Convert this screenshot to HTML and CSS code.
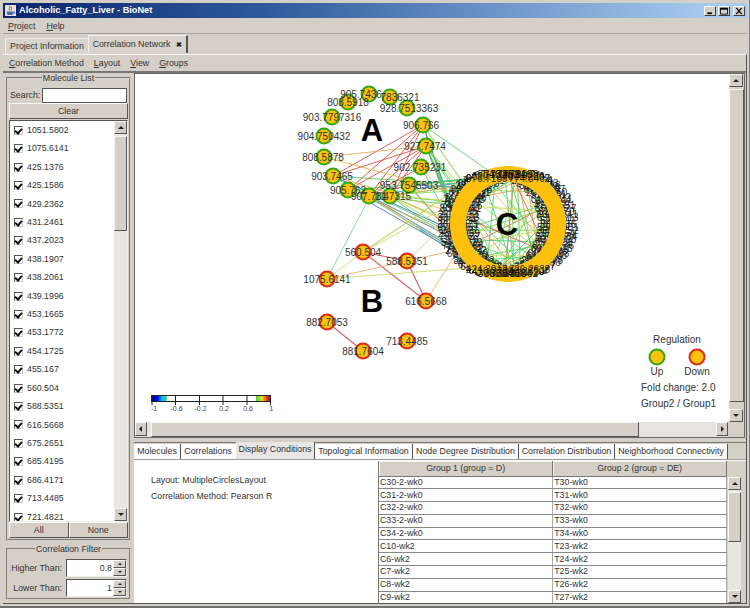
FILE: index.html
```html
<!DOCTYPE html>
<html lang="en">
<head>
<meta charset="utf-8">
<title>Alcoholic_Fatty_Liver - BioNet</title>
<link rel="stylesheet" href="styles.css">
</head>
<body>
<div class="window">
  <header class="titlebar">
    <svg class="appicon" viewBox="0 0 12 12"><rect width="12" height="12" fill="#e8e4dc"/><path d="M5 1c2 2-2 3 0 5M7 2c1 2-1 2 0 4" stroke="#c83020" fill="none"/><path d="M2 7h7v2c0 1-1 2-2 2H4c-1 0-2-1-2-2z" fill="#4a6aa8"/><path d="M9 7.5h1.5v1.5H9" stroke="#4a6aa8" fill="none"/></svg>
    <span class="title">Alcoholic_Fatty_Liver - BioNet</span>
    <span class="winbtns">
      <span class="winbtn"><svg viewBox="0 0 10 9"><rect x="2" y="6" width="5" height="2" fill="#000"/></svg></span>
      <span class="winbtn"><svg viewBox="0 0 10 9"><path d="M1 1.5h8V8H1z M1 1.5h8" fill="none" stroke="#000"/><rect x="1" y="1" width="8" height="2"/></svg></span>
      <span class="winbtn close"><svg viewBox="0 0 10 9"><path d="M2 1l6 7M8 1L2 8" stroke="#000" stroke-width="1.4"/></svg></span>
    </span>
  </header>
  <nav class="menubar">
    <span><u>P</u>roject</span><span><u>H</u>elp</span>
  </nav>
  <div class="tabs">
    <span class="tab">Project Information</span>
    <span class="tab active">Correlation Network <b class="x">✖</b></span>
  </div>
  <div class="tabpanel">
    <nav class="toolbar">
      <span><u>C</u>orrelation Method</span><span><u>L</u>ayout</span><span><u>V</u>iew</span><span><u>G</u>roups</span>
    </nav>
    <div class="main">
      <aside class="side">
        <fieldset class="group mol">
          <legend>Molecule List</legend>
          <div class="search"><label>Search:</label><span class="field"></span></div>
          <div class="btn clear">Clear</div>
          <div class="list">
            <div class="rows">
              <div class="row"><i class="cb"></i>1051.5802</div>
              <div class="row"><i class="cb"></i>1075.6141</div>
              <div class="row"><i class="cb"></i>425.1376</div>
              <div class="row"><i class="cb"></i>425.1586</div>
              <div class="row"><i class="cb"></i>429.2362</div>
              <div class="row"><i class="cb"></i>431.2461</div>
              <div class="row"><i class="cb"></i>437.2023</div>
              <div class="row"><i class="cb"></i>438.1907</div>
              <div class="row"><i class="cb"></i>438.2061</div>
              <div class="row"><i class="cb"></i>439.1996</div>
              <div class="row"><i class="cb"></i>453.1665</div>
              <div class="row"><i class="cb"></i>453.1772</div>
              <div class="row"><i class="cb"></i>454.1725</div>
              <div class="row"><i class="cb"></i>455.167</div>
              <div class="row"><i class="cb"></i>560.504</div>
              <div class="row"><i class="cb"></i>588.5351</div>
              <div class="row"><i class="cb"></i>616.5668</div>
              <div class="row"><i class="cb"></i>675.2651</div>
              <div class="row"><i class="cb"></i>685.4195</div>
              <div class="row"><i class="cb"></i>686.4171</div>
              <div class="row"><i class="cb"></i>713.4485</div>
              <div class="row"><i class="cb"></i>721.4821</div>
            </div>
            <div class="vbar listbar">
              <span class="arrow up"></span>
              <span class="track"><span class="thumb t-list"></span></span>
              <span class="arrow down"></span>
            </div>
          </div>
          <div class="btnrow"><div class="btn">All</div><div class="btn">None</div></div>
        </fieldset>
        <fieldset class="group filter">
          <legend>Correlation Filter</legend>
          <div class="spinrow"><label>Higher Than:</label><span class="spin"><span class="val">0.8</span><span class="spinbtns"><i class="up"></i><i class="down"></i></span></span></div>
          <div class="spinrow"><label>Lower Than:</label><span class="spin"><span class="val">1</span><span class="spinbtns"><i class="up"></i><i class="down"></i></span></span></div>
        </fieldset>
      </aside>
      <section class="content">
        <div class="canvasframe">
          <div class="canvasrow">
            <div class="canvas"><svg id="net" viewBox="135 74 593 347" width="593" height="347"></svg></div>
            <div class="vbar canvasbar">
              <span class="arrow up"></span>
              <span class="track"><span class="thumb t-canvas"></span></span>
              <span class="arrow down"></span>
            </div>
          </div>
          <div class="hbar">
            <span class="arrow left"></span>
            <span class="htrack"><span class="hthumb"></span></span>
            <span class="arrow right"></span>
            <span class="corner"></span>
          </div>
        </div>
        <div class="subtabs">
          <span class="subtab w1">Molecules</span>
          <span class="subtab w2">Correlations</span>
          <span class="subtab w3 active">Display Conditions</span>
          <span class="subtab w4">Topological Information</span>
          <span class="subtab w5">Node Degree Distribution</span>
          <span class="subtab w6">Correlation Distribution</span>
          <span class="subtab w7">Neighborhood Connectivity</span>
        </div>
        <div class="subpanel">
          <div class="info">
            <p>Layout: MultipleCirclesLayout</p>
            <p>Correlation Method: Pearson R</p>
          </div>
          <div class="tablewrap">
            <div class="tableview">
              <table>
                <thead><tr><th>Group 1 (group = D)</th><th>Group 2 (group = DE)</th></tr></thead>
                <tbody>
                  <tr><td>C30-2-wk0</td><td>T30-wk0</td></tr>
                  <tr><td>C31-2-wk0</td><td>T31-wk0</td></tr>
                  <tr><td>C32-2-wk0</td><td>T32-wk0</td></tr>
                  <tr><td>C33-2-wk0</td><td>T33-wk0</td></tr>
                  <tr><td>C34-2-wk0</td><td>T34-wk0</td></tr>
                  <tr><td>C10-wk2</td><td>T23-wk2</td></tr>
                  <tr><td>C6-wk2</td><td>T24-wk2</td></tr>
                  <tr><td>C7-wk2</td><td>T25-wk2</td></tr>
                  <tr><td>C8-wk2</td><td>T26-wk2</td></tr>
                  <tr><td>C9-wk2</td><td>T27-wk2</td></tr>
                </tbody>
              </table>
            </div>
            <div class="tablebar">
              <span class="tablecorner"></span>
              <div class="vbar">
                <span class="arrow up"></span>
                <span class="track"><span class="thumb t-table"></span></span>
                <span class="arrow down"></span>
              </div>
            </div>
          </div>
        </div>
      </section>
    </div>
  </div>
</div>
<script src="graph.js"></script>
</body>
</html>
```
FILE: styles.css
```css
* { box-sizing: border-box; }
html, body { margin: 0; padding: 0; }
body {
  width: 750px; height: 608px; overflow: hidden;
  background: #d4d0c8;
  font: 8.8px/1 "Liberation Sans", Arial, sans-serif;
  color: #333;
  white-space: nowrap;
}
u { text-decoration: underline; text-underline-offset: 1px; }
.window {
  height: 608px; padding: 3px 2px 2px 3px;
  display: flex; flex-direction: column;
  background: #d4d0c8;
  border-right: 1px solid #808080; border-bottom: 2px solid #707070;
}
.titlebar {
  height: 15px; flex: none;
  display: flex; align-items: center;
  padding: 0 2px 0 2px;
  background: linear-gradient(90deg, #0a246a 0%, #2e5a9c 35%, #a6caf0 95%);
}
.appicon { width: 11px; height: 11px; flex: none; margin-right: 3px; }
.title { color: #fff; font-weight: bold; font-size: 9.2px; }
.winbtns { margin-left: auto; display: flex; gap: 2px; }
.winbtn {
  width: 12px; height: 10px; background: #d4d0c8; display: flex;
  border: 1px solid; border-color: #fff #404040 #404040 #fff;
}
.winbtn svg { width: 10px; height: 8px; }
.winbtn.close { margin-left: 1px; }
.menubar {
  height: 16px; flex: none; display: flex; align-items: center; gap: 11px;
  padding: 2px 0 0 5px; border-bottom: 1px solid #a8a49c;
}
.tabs {
  height: 20px; flex: none; display: flex; align-items: flex-end; padding-left: 2px;
}
.tab {
  height: 16px; width: 83px; display: flex; align-items: center; justify-content: center;
  border-top: 1px solid #eee; border-left: 1px solid #eee; background: #d8d4cc;
}
.tab.active {
  height: 18px; width: 100px; padding-bottom: 1px; margin-bottom: 1px;
  border-right: 2px solid #555; border-top: 1px solid #f4f4f4;
}
.x { font-size: 7px; margin-left: 6px; color: #222; }
.tabpanel {
  flex: 1; min-height: 0; display: flex; flex-direction: column;
  border-top: 1px solid #f4f4f0; border-right: 1px solid #555; border-bottom: 1px solid #555;
}
.toolbar {
  height: 18px; flex: none; display: flex; align-items: center; gap: 10px;
  padding-left: 6px; border-bottom: 2px solid #777;
}
.main { flex: 1; min-height: 0; display: flex; }
.side {
  width: 131px; flex: none; display: flex; flex-direction: column;
  padding: 0 3px 3px 3px; gap: 3px;
}
.group {
  margin: 0; min-width: 0; padding: 0 1px 1px 1px;
  border: 2px groove #d4d0c8;
}
.group legend { padding: 0 1px; margin: 0 auto; height: 10px; line-height: 10px; }
.mol { flex: 1; min-height: 0; display: flex; flex-direction: column; }
.filter { height: 56px; flex: none; display: flex; flex-direction: column; gap: 2px; }
.search { display: flex; align-items: center; height: 15px; margin-top: 5px; padding-left: 1px; gap: 3px; flex: none; }
.search label { width: 29px; flex: none; }
.field { flex: 1; height: 15px; background: #fff; border: 1px solid #555; margin-right: 1px; }
.btn {
  height: 16px; flex: 1; display: flex; align-items: center; justify-content: center;
  background: #d4d0c8; border: 1px solid; border-color: #f8f8f4 #555 #555 #f8f8f4;
}
.btn.clear { flex: none; }
.btnrow { display: flex; flex: none; height: 16px; }
.list {
  flex: 1; min-height: 0; margin-top: 1px; display: flex; background: #fff;
  border: 1px solid; border-color: #555 #eee #eee #555;
}
.rows { flex: 1; padding: 0 0 0 4px; overflow: hidden; }
.row { height: 18.43px; display: flex; align-items: center; gap: 4px; }
.cb {
  width: 9px; height: 9px; flex: none; border: 1px solid #555; border-right-color: #ccc; border-bottom-color: #ccc;
  position: relative; background: #fff;
}
.cb::after {
  content: ""; position: absolute; left: 1px; top: 0; width: 3px; height: 5px;
  border: solid #111; border-width: 0 2px 2px 0; transform: rotate(40deg);
}
.vbar { width: 13px; flex: none; display: flex; flex-direction: column; background: #e8e6e0; }
.arrow {
  flex: none; width: 13px; height: 13px; background: #d4d0c8; position: relative; display: block;
  border: 1px solid; border-color: #f8f8f4 #555 #555 #f8f8f4;
}
.arrow::after { content: ""; position: absolute; left: 3px; top: 4px; width: 0; height: 0; border: 3px solid transparent; }
.arrow.up::after { top: 1px; border-bottom: 3px solid #222; }
.arrow.down::after { top: 4px; border-top: 3px solid #222; }
.arrow.left::after { left: 0; top: 3px; border-right: 3px solid #222; }
.arrow.right::after { left: 4px; top: 3px; border-left: 3px solid #222; }
.track { flex: 1; min-height: 0; display: block; padding-top: 2px; }
.thumb {
  display: block; background: #d4d0c8; border: 1px solid; border-color: #f8f8f4 #555 #555 #f8f8f4;
}
.t-list { height: 95px; }
.t-canvas { height: 313px; }
.t-table { height: 50px; }
.spinrow { display: flex; align-items: center; height: 18px; padding-right: 1px; flex: none; }
.spinrow:first-of-type { margin-top: 5px; }
.spinrow label { width: 53px; text-align: right; flex: none; }
.spin {
  margin-left: 4px; flex: 1; height: 18px; display: flex; background: #fff; align-items: stretch;
  border: 1px solid; border-color: #555 #eee #eee #555;
}
.val { flex: 1; text-align: right; padding: 4px 1px 0 0; }
.spinbtns { width: 13px; display: flex; flex-direction: column; flex: none; }
.spinbtns i {
  flex: 1; background: #d4d0c8; border: 1px solid; border-color: #f8f8f4 #555 #555 #f8f8f4; position: relative;
}
.spinbtns i::after { content: ""; position: absolute; left: 4px; border: 2px solid transparent; }
.spinbtns .up::after { top: 0; border-bottom: 2px solid #222; }
.spinbtns .down::after { top: 2px; border-top: 2px solid #222; }
.content { flex: 1; min-width: 0; display: flex; flex-direction: column; padding-left: 0; }
.canvasframe {
  flex: none; height: 365px; margin-right: 1px;
  border: 1px solid #666; display: flex; flex-direction: column;
}
.canvasrow { flex: 1; min-height: 0; display: flex; }
.canvas { width: 594px; flex: none; background: #fff; overflow: hidden; }
#net { display: block; }
#net text { font-family: "Liberation Sans", Arial, sans-serif; }
.canvasbar { width: 14px; flex: 1; background: #d4d0c8; }
.canvasbar .arrow { width: 14px; }
.hbar { height: 15px; flex: none; display: flex; background: #e6e4de; }
.htrack { flex: 1; display: block; padding-left: 4px; }
.hthumb { display: block; width: 488px; height: 100%; background: #d4d0c8; border: 1px solid; border-color: #f8f8f4 #555 #555 #f8f8f4; }
.arrow.left, .arrow.right { width: 12px; height: 14px; }
.corner { width: 16px; flex: none; background: #d4d0c8; }
.subtabs {
  height: 17px; flex: none; margin-top: 4px; display: flex; align-items: flex-end;
  border-top: 1px solid #777;
}
.subtab {
  height: 15px; flex: none; display: flex; align-items: center; justify-content: center;
  background: #fbfbfa; border-right: 1px solid #555;
}
.subtab.active { height: 17px; padding-bottom: 2px; background: #e8e6e2; }
.w1 { width: 47px; } .w2 { width: 55px; border-right-color: transparent; } .w3 { width: 79px; } .w4 { width: 98px; }
.w5 { width: 106px; } .w6 { width: 96px; } .w7 { width: 113px; }
.subpanel { flex: 1; min-height: 0; background: #fff; display: flex; border-top: 1px solid #999; }
.info { width: 244px; flex: none; padding: 16px 0 0 17px; }
.info p { margin: 0 0 6px; height: 10px; }
.tablewrap { flex: 1; min-width: 0; display: flex; background: #d4d0c8; margin-top: 1px; }
.tableview { width: 349px; flex: none; overflow: hidden; border-left: 1px solid #777; background: #fff; }
table { border-collapse: collapse; table-layout: fixed; width: 348px; }
th {
  height: 15px; font-weight: normal; background: #d4d0c8; text-align: center; padding: 0;
  border-right: 1px solid #777; border-bottom: 1px solid #777;
  box-shadow: inset 1px 1px 0 #f4f4f0;
}
td { height: 12.8px; padding: 0 0 0 1px; border-right: 1px solid #aaa; border-bottom: 1px solid #888; background: #fff; line-height: 11px; }
.tablebar { width: 17px; flex: none; display: flex; flex-direction: column; padding-left: 1px; }
.tablecorner { height: 16px; flex: none; display: block; }
.tablebar .vbar { flex: 1; min-height: 0; }
```
FILE: graph.js
```js
(function () {
  var NS = 'http://www.w3.org/2000/svg';
  var svg = document.getElementById('net');
  var seed = 4711;
  function rnd() { seed = (seed * 1103515245 + 12345) & 0x7fffffff; return seed / 0x7fffffff; }
  function el(name, attrs, text) {
    var e = document.createElementNS(NS, name);
    for (var k in attrs) e.setAttribute(k, attrs[k]);
    if (text !== undefined) e.textContent = text;
    svg.appendChild(e);
    return e;
  }
  function line(a, b, c, w, o) {
    el('line', { x1: a[0], y1: a[1], x2: b[0], y2: b[1], stroke: c, 'stroke-width': w || 1, 'stroke-opacity': o || 0.85 });
  }
  var GREEN = '#33a80f', RED = '#d92a14', FILL = '#fdc10e';
  var A = [
    [369, 94, '905.7436', 361], [390, 97, '7836321', 400], [348, 102, '808.5918', 348],
    [332, 117, '903.7797316', 332], [407, 108, '928.7513363', 409], [423, 125, '906.766', 421],
    [324, 136, '904.750432', 324], [426, 146, '927.7474', 425], [324, 157, '808.5878', 323],
    [421, 167, '902.735231', 420], [333, 176, '903.7465', 332], [409, 185, '953.7545503', 409],
    [348, 190, '905.762', 348], [369, 196, '907.731', 369], [390, 196, '1.47315', 393]
  ];
  var B = [
    [327, 279, '1075.6141'], [363, 252, '560.504'], [407, 261, '588.5351'], [426, 301, '616.5668'],
    [327, 322, '882.7053'], [363, 351, '881.7604'], [407, 341, '713.4485']
  ];
  var CX = 508, CY = 224, R = 50, N = 100;
  function ring(i) {
    var t = i / N * Math.PI * 2;
    return [CX + R * Math.cos(t), CY + R * Math.sin(t)];
  }
  var ringIn = ['#4fd05f', '#79dd4e', '#4fd05f', '#9ae04a', '#3fc88a', '#4fd05f', '#79dd4e', '#4fd05f', '#79dd4e', '#e89a50', '#d8573f', '#c8d850'];
  var i;
  /* edges inside the ring */
  for (i = 0; i < 80; i++) {
    var a = ring(Math.floor(rnd() * N)), b = ring(Math.floor(rnd() * N));
    line(a, b, ringIn[Math.floor(rnd() * ringIn.length)]);
  }
  /* edges from the right side of the A arc to the left half of the ring */
  var out = ['#4fd05f', '#79dd4e', '#3fc8a0', '#4fd05f', '#c8d850', '#e8b060', '#4fd05f', '#3f8fd0', '#3b6fc0', '#9ae04a'];
  var sources = [5, 5, 7, 7, 7, 9, 9, 11, 11, 13, 14, 14, 12, 10];
  for (i = 0; i < 46; i++) {
    var n = A[sources[Math.floor(rnd() * sources.length)]];
    var k = Math.floor(N * 0.3 + rnd() * N * 0.42);
    line([n[0], n[1]], ring(k), out[Math.floor(rnd() * out.length)]);
  }
  /* edges among A */
  var redA = [[5, 12], [5, 10], [5, 13], [7, 10], [7, 12], [7, 13], [7, 14], [9, 13], [5, 14], [11, 13]];
  redA.forEach(function (p) { line(A[p[0]], A[p[1]], '#d8473a'); });
  [[7, 8]].forEach(function (p) { line(A[p[0]], A[p[1]], '#e8a860'); });
  [[8, [470, 196]], [10, [462, 215]], [12, [455, 235]], [13, [450, 250]], [14, [448, 222]]].forEach(function (p) {
    line(A[p[0]], p[1], '#e0b040');
  });
  /* edges of group B */
  line(B[1], B[2], '#d04a50', 1.2);
  line(B[1], B[3], '#d04a50', 1.2);
  line(B[2], B[3], '#d04a50', 1.2);
  line(B[4], B[5], '#d04a50', 1.2);
  line(B[0], [368, 200], '#6fdc80');
  line(B[0], B[1], '#c8d860');
  line(B[0], [456, 250], '#e8a860');
  line(B[0], [468, 268], '#c8d860');
  line(B[1], [446, 196], '#b8d050', 1.2);
  line(B[1], [452, 204], '#c8d860');
  line(B[2], [441, 228], '#e0c070');
  line(B[3], [456, 254], '#e0b060');
  line([420, 230], [458, 254], '#3f8fd0');
  line([416, 226], [456, 250], '#40b0b0');
  /* ring: labels first, then the nodes over them, then the readable top and bottom labels */
  var ringOrder = [];
  for (i = 0; i < N; i++) ringOrder.push(ring(i));
  ringOrder.forEach(function (p, idx) {
    var name = (Math.floor(rnd() * 700) + 200) + '.' + Math.floor(rnd() * (idx % 3 ? 9000 : 900) + 100);
    el('text', { x: p[0], y: p[1] + 3.5, 'text-anchor': 'middle', 'font-size': 10, fill: '#111', 'fill-opacity': 0.9 }, name);
  });
  ringOrder.forEach(function (p) {
    el('circle', { cx: p[0], cy: p[1], r: 8, fill: FILL });
  });
  ringOrder.forEach(function (p, idx) {
    if (Math.abs(p[1] - CY) > R * 0.9 && idx % 2 === 0) {
      el('text', { x: p[0], y: p[1] + 3.5, 'text-anchor': 'middle', 'font-size': 10, fill: '#111', 'fill-opacity': 0.9 }, (200 + idx * 7) + '.' + (1000 + idx * 91));
    }
  });
  function node(x, y, stroke) {
    el('circle', { cx: x, cy: y, r: 7.5, fill: FILL, stroke: stroke, 'stroke-width': 2 });
  }
  function nodes(list, stroke) {
    list.forEach(function (n) { node(n[0], n[1], stroke); });
    list.forEach(function (n) {
      el('text', { x: n[3] || n[0], y: n[1] + 3.5, 'text-anchor': 'middle', 'font-size': 10, fill: '#333' }, n[2]);
    });
  }
  nodes(A, GREEN);
  nodes(B, RED);
  /* group letters */
  [['A', 372, 141], ['B', 372, 312], ['C', 507, 235]].forEach(function (g) {
    el('text', { x: g[1], y: g[2], 'text-anchor': 'middle', 'font-size': 31, 'font-weight': 'bold', fill: '#000' }, g[0]);
  });
  /* colour scale */
  var defs = el('defs', {});
  var lg = document.createElementNS(NS, 'linearGradient');
  lg.setAttribute('id', 'scale');
  [[0, '#00008c'], [0.05, '#0000ff'], [0.09, '#00c8ff'], [0.125, '#30d060'], [0.13, '#fff'], [0.875, '#fff'], [0.88, '#50d040'], [0.93, '#e8e020'], [0.97, '#f03010'], [1, '#c00000']].forEach(function (s) {
    var st = document.createElementNS(NS, 'stop');
    st.setAttribute('offset', s[0]);
    st.setAttribute('stop-color', s[1]);
    lg.appendChild(st);
  });
  defs.appendChild(lg);
  el('rect', { x: 151.5, y: 395.5, width: 119, height: 6, fill: 'url(#scale)', stroke: '#222', 'stroke-width': 1 });
  [[152, '-1'], [175.5, '-0.6'], [199.5, '-0.2'], [223, '0.2'], [247, '0.6'], [270.5, '1']].forEach(function (t) {
    line([t[0], 395], [t[0], 405], '#222', 1, 1);
    el('text', { x: t[0] + (t[1] === '-1' ? 2 : 1), y: 411, 'text-anchor': 'middle', 'font-size': 7, fill: '#444' }, t[1]);
  });
  /* legend */
  el('text', { x: 677, y: 343, 'text-anchor': 'middle', 'font-size': 10, fill: '#333' }, 'Regulation');
  el('circle', { cx: 657, cy: 357, r: 7.5, fill: FILL, stroke: GREEN, 'stroke-width': 2 });
  el('circle', { cx: 697, cy: 357, r: 7.5, fill: FILL, stroke: RED, 'stroke-width': 2 });
  el('text', { x: 657, y: 375, 'text-anchor': 'middle', 'font-size': 10, fill: '#333' }, 'Up');
  el('text', { x: 697, y: 375, 'text-anchor': 'middle', 'font-size': 10, fill: '#333' }, 'Down');
  el('text', { x: 641, y: 391, 'font-size': 10, fill: '#333' }, 'Fold change: 2.0');
  el('text', { x: 641, y: 407, 'font-size': 10, fill: '#333' }, 'Group2 / Group1');
})();
```
